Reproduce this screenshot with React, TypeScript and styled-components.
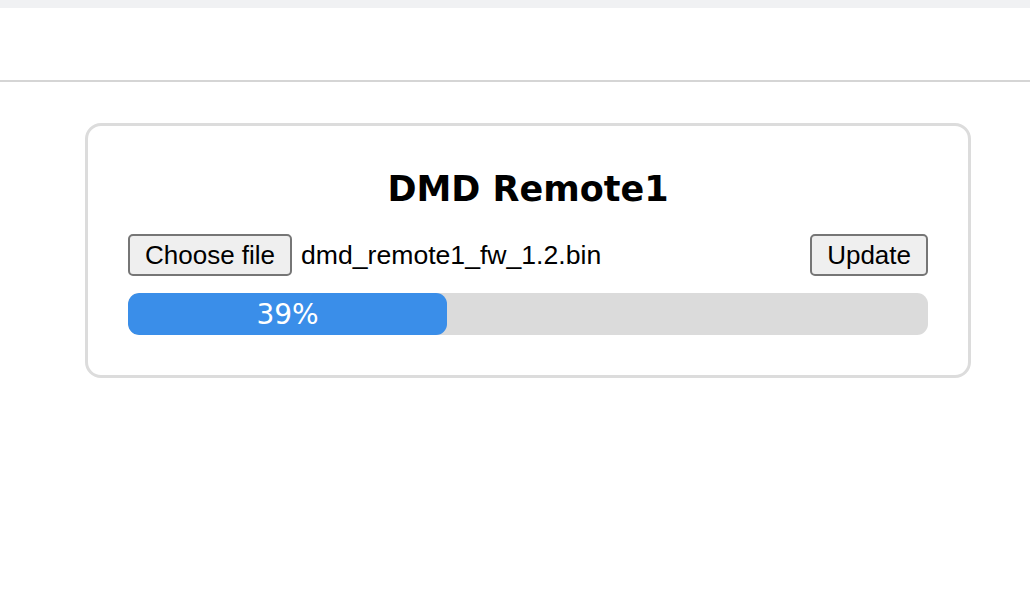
import React from "react";
import styled, { createGlobalStyle } from "styled-components";

const GlobalStyle = createGlobalStyle`
  html, body {
    margin: 0;
    padding: 0;
    background: #ffffff;
  }
  body {
    font-family: "Liberation Sans", Arial, sans-serif;
    color: #000;
  }
`;

const Page = styled.div`
  width: 1030px;
  min-height: 592px;
  background: #ffffff;
`;

const TopStrip = styled.div`
  height: 8px;
  background: #f0f1f3;
`;

const Header = styled.header`
  height: 72px;
  border-bottom: 2px solid #d5d5d5;
`;

const Main = styled.main`
  padding: 41px 0 0 85px;
`;

const Card = styled.section`
  width: 886px;
  box-sizing: border-box;
  border: 3px solid #dcdcdc;
  border-radius: 16px;
  padding: 43px 40px 40px;
`;

const Title = styled.h2`
  margin: 0 0 25px;
  font-family: "DejaVu Sans", Verdana, sans-serif;
  font-weight: 700;
  font-size: 35px;
  line-height: 40px;
  text-align: center;
`;

const UploadRow = styled.div`
  display: flex;
  align-items: center;
  gap: 9px;
  margin-bottom: 17px;
`;

const Button = styled.button<{ $pad?: number }>`
  height: 42px;
  box-sizing: border-box;
  padding: 0 ${({ $pad }) => $pad ?? 15}px;
  border: 2px solid #767676;
  border-radius: 5px;
  background: #efefef;
  font-family: "Liberation Sans", Arial, sans-serif;
  font-size: 26px;
  color: #000;
  line-height: 38px;
  cursor: pointer;
`;

const FileName = styled.span`
  flex: 1;
  font-size: 26.6px;
  line-height: 42px;
  white-space: nowrap;
`;

const Track = styled.div`
  height: 42px;
  border-radius: 11px;
  background: #dbdbdb;
  overflow: hidden;
`;

const Fill = styled.div`
  height: 100%;
  border-radius: 11px;
  background: #3a8ee9;
  display: flex;
  align-items: center;
  justify-content: center;
  font-family: "DejaVu Sans", Verdana, sans-serif;
  font-size: 28px;
  color: #ffffff;
`;

const progress = { label: 39, width: 39.875 };

export default function App() {
  return (
    <Page>
      <GlobalStyle />
      <TopStrip />
      <Header />
      <Main>
        <Card>
          <Title>DMD Remote1</Title>
          <UploadRow>
            <Button $pad={15}>Choose file</Button>
            <FileName>dmd_remote1_fw_1.2.bin</FileName>
            <Button $pad={15}>Update</Button>
          </UploadRow>
          <Track>
            <Fill style={{ width: `${progress.width}%` }}>{progress.label}%</Fill>
          </Track>
        </Card>
      </Main>
    </Page>
  );
}
